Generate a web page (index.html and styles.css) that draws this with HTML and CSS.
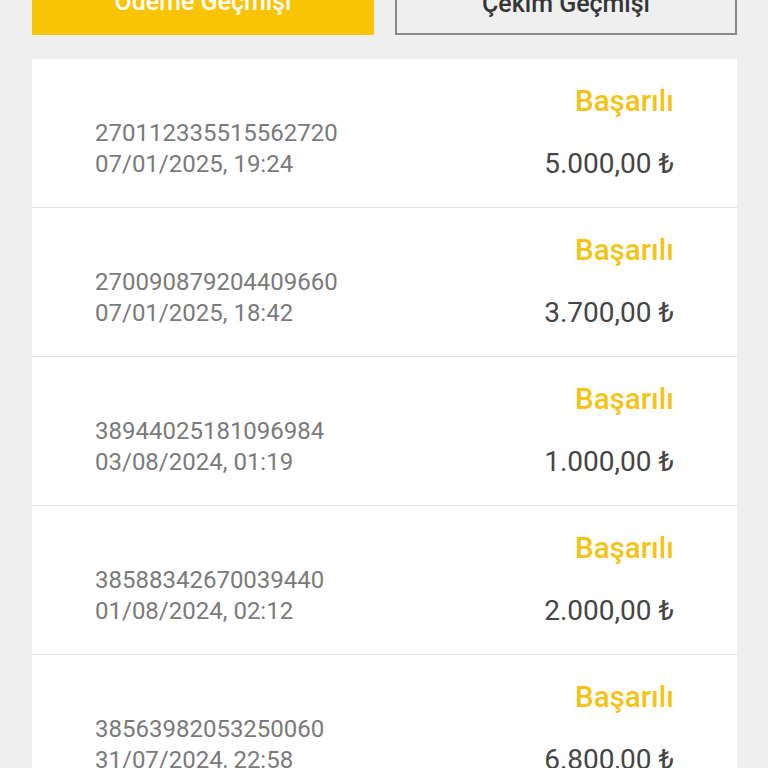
FILE: index.html
```html
<!DOCTYPE html>
<html lang="tr">
<head>
    <meta charset="UTF-8">
    <meta name="viewport" content="width=device-width, initial-scale=1.0">
    <title>Ödeme Geçmişi</title>
    <link rel="stylesheet" href="styles.css">
</head>
<body>
    <div class="page">
        <div class="tabs">
            <button class="tab tab-active">Ödeme Geçmişi</button>
            <button class="tab">Çekim Geçmişi</button>
        </div>

        <div class="history">
            <div class="row">
                <div class="info">
                    <div>270112335515562720</div>
                    <div>07/01/2025, 19:24</div>
                </div>
                <div class="side">
                    <div class="status">Başarılı</div>
                    <div class="amount">5.000,00 ₺</div>
                </div>
            </div>
            <div class="row">
                <div class="info">
                    <div>270090879204409660</div>
                    <div>07/01/2025, 18:42</div>
                </div>
                <div class="side">
                    <div class="status">Başarılı</div>
                    <div class="amount">3.700,00 ₺</div>
                </div>
            </div>
            <div class="row">
                <div class="info">
                    <div>38944025181096984</div>
                    <div>03/08/2024, 01:19</div>
                </div>
                <div class="side">
                    <div class="status">Başarılı</div>
                    <div class="amount">1.000,00 ₺</div>
                </div>
            </div>
            <div class="row">
                <div class="info">
                    <div>38588342670039440</div>
                    <div>01/08/2024, 02:12</div>
                </div>
                <div class="side">
                    <div class="status">Başarılı</div>
                    <div class="amount">2.000,00 ₺</div>
                </div>
            </div>
            <div class="row">
                <div class="info">
                    <div>38563982053250060</div>
                    <div>31/07/2024, 22:58</div>
                </div>
                <div class="side">
                    <div class="status">Başarılı</div>
                    <div class="amount">6.800,00 ₺</div>
                </div>
            </div>
        </div>
    </div>
</body>
</html>
```

FILE: styles.css
```css
body {
    font-family: Roboto, 'Liberation Sans', sans-serif;
    margin: 0;
    background: #efefef;
}
.page {
    padding: 0 31px 0 32px;
    margin-top: -23px;
}
.tabs {
    display: grid;
    grid-template-columns: 1fr 1fr;
    gap: 21px;
}
.tab {
    height: 58px;
    font-family: inherit;
    font-size: 25px;
    font-weight: 500;
    color: #353535;
    background: #efefef;
    border: 2px solid #8a8a8a;
    padding: 0 0 6px;
}
.tab-active {
    background: #f9c406;
    border: none;
    color: #fff;
    padding-bottom: 10px;
}
.history {
    margin-top: 24px;
    background: #fff;
}
.row {
    display: flex;
    justify-content: space-between;
    align-items: flex-end;
    padding: 27px 63px 28px;
    border-bottom: 1px solid #e2e2e2;
}
.info {
    font-size: 24px;
    line-height: 31px;
    color: #7a7a7a;
    margin-bottom: -1px;
}
.side {
    display: flex;
    flex-direction: column;
    align-items: flex-end;
    gap: 31px;
}
.status {
    font-size: 29.5px;
    line-height: 31px;
    font-weight: 500;
    color: #f5c316;
}
.amount {
    font-size: 28px;
    line-height: 31px;
    color: #454545;
}
```
